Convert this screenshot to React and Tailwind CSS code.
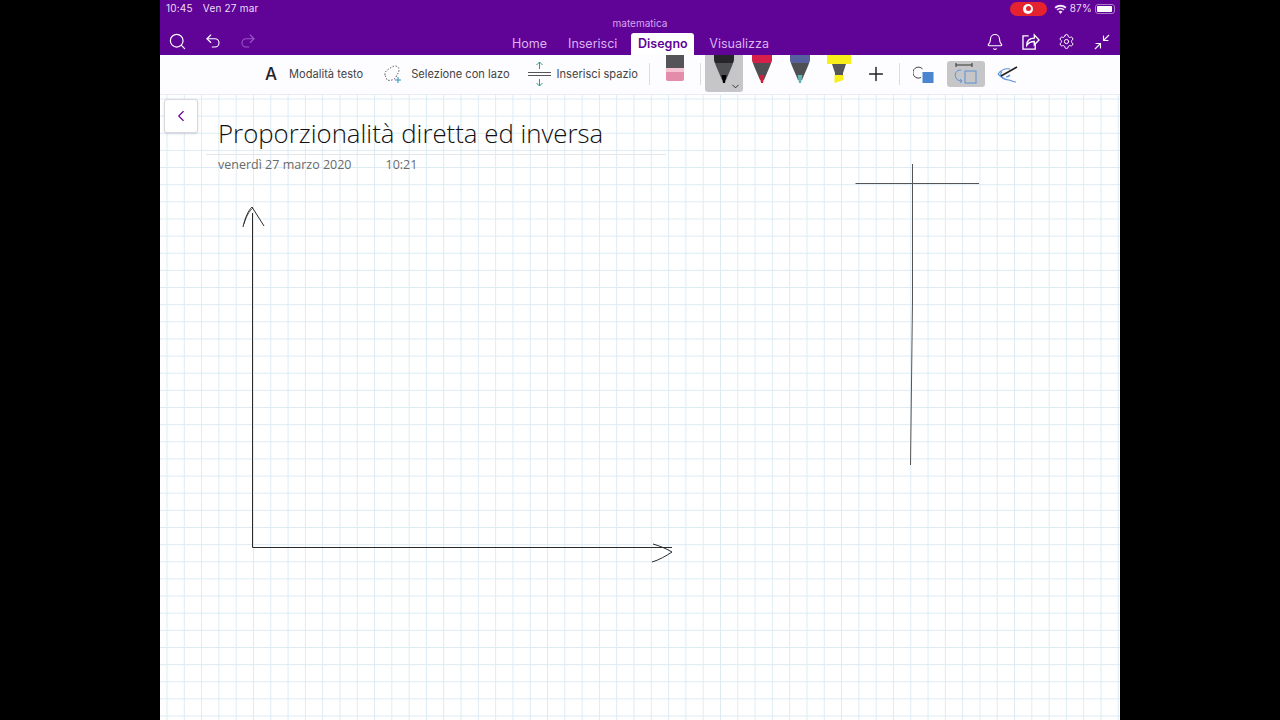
import { Search, Undo2, Redo2, Bell, Settings, Minimize2, Plus, ChevronDown, ChevronLeft } from "lucide-react";

const ui = { fontFamily: '"Inter", "Liberation Sans", sans-serif' };

const Pen = ({ tip, band, body = "#4e4f53", top = "#3a3a3c" }) => (
  <svg width="24" height="30" viewBox="0 0 24 30">
    <path d="M2 0h20v3c0 3-1 5-2 8l-6 14h-4L4 11C3 8 2 6 2 3z" fill={body} />
    <path d="M2 0h20v3c0 2-.5 3-1 5H3C2.500 6 2 5 2 3z" fill={band || top} />
    <path d="M9.500 20h5l-1.500 8h-2z" fill={tip} />
  </svg>
);

const Ink = () => (
  <svg className="absolute left-0 top-0 pointer-events-none" width="960" height="720" viewBox="0 0 960 720" fill="none" stroke="#2b2b2b">
    {/* asse y e asse x */}
    <path d="M92.500 213V547.500H512" strokeWidth="1" />
    <path d="M83 227C85 218 88 211 92 207L104 226" strokeWidth="1" />
    <path d="M84 224C86 217 89 211 93 208" strokeWidth="0.8" />
    <path d="M493 544C500 546 507 549 512 552C506 556 499 560 492 562" strokeWidth="1" />
    {/* croce a destra */}
    <path d="M695.500 183.500H819" stroke="#555" strokeWidth="1" />
    <path d="M752.500 164V300L750.500 465" stroke="#555" strokeWidth="1" />
  </svg>
);

export default function App() {
  return (
    <div className="min-h-[720px] w-[1280px] bg-black px-[160px]" style={ui}>
      <div className="relative h-[720px] w-[960px] overflow-hidden bg-white">
        {/* barra viola */}
        <header className="h-[55px] bg-[#5f0497] text-white">
          <div className="flex h-[16px] items-center justify-between pl-[6px] pr-[5px] pt-[1px] text-[10px] tracking-[0.2px] text-[#ecdcf5]">
            <div className="flex gap-[10px]">
              <span>10:45</span>
              <span>Ven 27 mar</span>
            </div>
            <div className="flex items-center">
              <div className="flex h-[14px] w-[37px] items-center justify-center rounded-full bg-[#e5232f]">
                <div className="flex h-[10px] w-[10px] items-center justify-center rounded-full bg-white">
                  <div className="h-[5px] w-[5px] rounded-full bg-[#e5232f]" />
                </div>
              </div>
              <svg className="ml-[7px]" width="13" height="10" viewBox="0 0 13 10" fill="#f1e6f7">
                <path d="M6.500 10L4.500 7.600a3 3 0 0 1 4 0z" />
                <path d="M3.600 6.600L2.500 5.300a6 6 0 0 1 8 0L9.400 6.600a4.400 4.400 0 0 0-5.800 0z" />
                <path d="M1.700 4.400L.5 3a9 9 0 0 1 12 0l-1.200 1.400a7.400 7.400 0 0 0-9.600 0z" />
              </svg>
              <span className="ml-[3px]">87%</span>
              <div className="ml-[3px] flex h-[10px] w-[20px] items-center rounded-[3px] border border-[#a77cc4] p-[1px]">
                <div className="h-full w-[15px] rounded-[1px] bg-white" />
              </div>
            </div>
          </div>
          <div className="flex h-[15px] items-center justify-center pb-[2px] text-[10px] leading-none text-[#d9a5f0]">matematica</div>
          <div className="flex h-[24px] items-end pl-[8px] pr-[9px]">
            <div className="flex h-[24px] items-center gap-[17px] pb-[4px] text-white">
              <Search size={19} strokeWidth={1.5} />
              <Undo2 size={18} strokeWidth={1.5} />
              <Redo2 size={18} strokeWidth={1.5} className="text-[#9b56c6]" />
            </div>
            <nav className="ml-[255px] flex items-end text-[12.5px] leading-[22px] text-[#dcb2f2]">
              <span>Home</span>
              <span className="ml-[21px]">Inserisci</span>
              <span className="ml-[14px] flex h-[22px] w-[63px] items-center justify-center rounded-t-[3px] bg-white font-semibold text-[#5f0497]">Disegno</span>
              <span className="ml-[15px]">Visualizza</span>
            </nav>
            <div className="ml-auto flex h-[24px] items-center gap-[18px] pb-[3px]">
              <Bell size={18} strokeWidth={1.5} />
              <svg width="18" height="17" viewBox="0 0 19 18" fill="none" stroke="currentColor" strokeWidth="1.400">
                <path d="M7 3H1v14h13v-5" />
                <path d="M5 13c0-5 3-7.500 8-7.500V2l5 5.500L13 12.500V9c-3.500 0-6 1-8 4z" />
              </svg>
              <Settings size={17} strokeWidth={1.4} />
              <Minimize2 size={18} strokeWidth={1.5} />
            </div>
          </div>
        </header>

        {/* barra strumenti */}
        <div className="flex h-[40px] items-start border-b border-[#e8ecf0] bg-[#fdfcfe] pl-[105px] text-[11.1px] text-[#444]">
          <div className="flex h-[38px] items-center">
            <span className="text-[17px] font-medium leading-none text-[#222]">A</span>
            <span className="ml-[12px] whitespace-nowrap">Modalità testo</span>
            <svg className="ml-[20px]" width="20" height="20" viewBox="0 0 20 20" fill="none">
              <path d="M2 11C1 7 6 5 9 3c3-2 7-1 7 3 0 3-2 4-3 7-1 3-7 4-9 3z" stroke="#666" strokeWidth="1" strokeDasharray="1.500 1.500" />
              <path d="M15 13v6M12 16h6" stroke="#2f8fb5" strokeWidth="1" />
            </svg>
            <span className="ml-[8px] whitespace-nowrap">Selezione con lazo</span>
            <svg className="ml-[18px]" width="23" height="26" viewBox="0 0 23 26" fill="none">
              <path d="M0 11.500H23M0 14.500H23" stroke="#555" strokeWidth="1" />
              <path d="M11.500 8V1M8.500 4l3-3 3 3M11.500 18v7M8.500 22l3 3 3-3" stroke="#2f9a80" strokeWidth="1" />
            </svg>
            <span className="ml-[6px] whitespace-nowrap">Inserisci spazio</span>
            <div className="ml-[11px] h-[22px] w-px bg-[#ddd]" />
            <div className="ml-[16px] flex h-[26px] w-[18px] flex-col self-start overflow-hidden rounded-b-[2px]">
              <div className="h-[13px] bg-[#555559]" />
              <div className="h-[4px] bg-[#f5c3d2]" />
              <div className="flex-1 bg-[#e48dab]" />
            </div>
            <div className="ml-[16px] h-[22px] w-px bg-[#ddd]" />
          </div>
          <div className="relative ml-[4px] flex h-[37px] w-[38px] justify-center rounded-b-[3px] bg-[#c6c6c8]">
            <Pen tip="#000" top="#26262a" />
            <ChevronDown size={11} strokeWidth={2} className="absolute bottom-0 right-[2px] text-[#222]" />
          </div>
          <div className="ml-[7px]"><Pen tip="#cc1f3e" band="#d81f4a" /></div>
          <div className="ml-[14px]"><Pen tip="#5fb5b3" band="#56609e" /></div>
          <div className="ml-[14px]">
            <svg width="26" height="29" viewBox="0 0 26 29">
              <path d="M1 0h24v9H1z" fill="#f7ee1c" />
              <path d="M6 9h14l-3 9v4H9v-4z" fill="#55565a" />
              <path d="M8.500 20h9v5l-9 3z" fill="#f7ee1c" />
            </svg>
          </div>
          <div className="flex h-[38px] items-center">
            <Plus size={22} strokeWidth={1.6} className="ml-[13px] text-[#222]" />
            <div className="ml-[12px] h-[22px] w-px bg-[#ddd]" />
            <svg className="ml-[13px]" width="22" height="20" viewBox="0 0 22 20" fill="none">
              <path d="M9.500 4.900A5.500 5.500 0 1 0 8 13.500" stroke="#444" strokeWidth="1" />
              <rect x="9.500" y="8" width="11" height="11" fill="#4a86cf" />
            </svg>
            <div className="ml-[12px] flex h-[26px] w-[38px] items-center justify-center rounded-[3px] bg-[#c6c6c8]">
              <svg width="30" height="24" viewBox="0 0 30 24" fill="none">
                <path d="M5 3H21M5 1v4M21 1v4" stroke="#333" strokeWidth="1" />
                <path d="M10 8C5 8 3 12 5 16c1 2 3 3 6 3" stroke="#5a90d8" strokeWidth="1" />
                <path d="M9 17l2 2-2 2" stroke="#5a90d8" strokeWidth="1" />
                <rect x="14" y="9" width="11" height="12" stroke="#5a90d8" strokeWidth="1" />
              </svg>
            </div>
            <svg className="ml-[12px]" width="21" height="18" viewBox="0 0 21 18" fill="none">
              <path d="M1 9C4 5 8 3 13 4M1 9c3 3 7 6 11 6 3 1 5 2 7 2" stroke="#5a90d8" strokeWidth="1.200" />
              <path d="M5 6.500a4 4 0 0 0 1 6.500M9 12c2 0 3-1 4-2" stroke="#5a90d8" strokeWidth="1.200" />
              <path d="M4 11L20 2" stroke="#222" strokeWidth="1.600" />
            </svg>
          </div>
        </div>

        {/* pagina con quadretti */}
        <main className="h-[625px] bg-white bg-[linear-gradient(to_right,#dcebf4_1px,transparent_1px),linear-gradient(to_bottom,#dcebf4_1px,transparent_1px)] bg-[size:17.3px_17.15px] bg-[position:6.500px_3.500px] pl-[4px] pt-[4px]">
          <button className="flex h-[34px] w-[34px] items-center justify-center rounded-[3px] border border-[#d8d8e0] bg-white pr-[1px] text-[#5f0497] shadow-sm">
            <ChevronLeft size={18} strokeWidth={1.5} />
          </button>
          <div className="ml-[42px] -mt-[16px] w-[460px] border-b border-[#e3e6ea] pb-[5px] pl-[12px]">
            <h1 className="whitespace-nowrap text-[25.800px] font-light leading-[32px] text-[#111]" style={{ fontFamily: '"Open Sans", sans-serif' }}>
              Proporzionalità diretta ed inversa
            </h1>
          </div>
          <div className="ml-[54px] mt-[1px] flex text-[12.500px] leading-[17px] text-[#6a6a6a]" style={{ fontFamily: '"Open Sans", sans-serif' }}>
            <span className="w-[167.500px]">venerdì 27 marzo 2020</span>
            <span>10:21</span>
          </div>
        </main>

        <Ink />
      </div>
    </div>
  );
}
